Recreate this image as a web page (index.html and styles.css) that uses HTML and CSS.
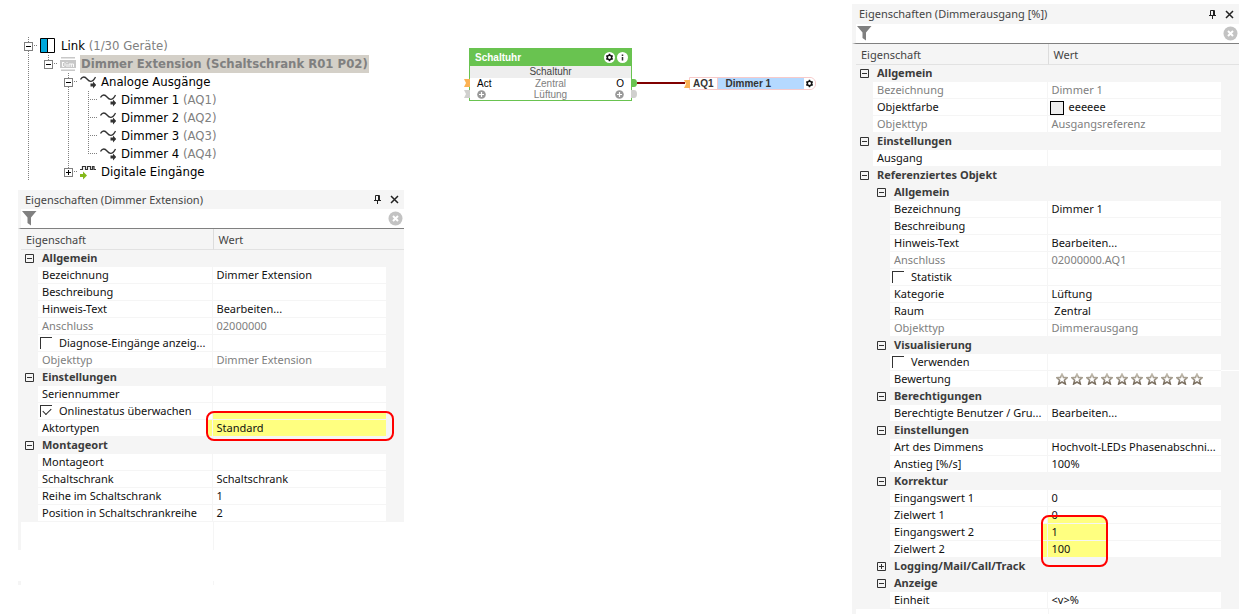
FILE: index.html
```html
<!DOCTYPE html>
<html lang="de">
<head>
<meta charset="utf-8">
<title>Dimmer Extension</title>
<link rel="stylesheet" href="styles.css">
</head>
<body>
<svg class="defs" aria-hidden="true">
  <defs>
    <linearGradient id="starInk" x1="0" y1="0" x2="0" y2="1">
      <stop offset="0" stop-color="#c4beb0"/><stop offset="1" stop-color="#75695a"/>
    </linearGradient>
  </defs>
  <symbol id="funnel" viewBox="0 0 15 15"><path fill="#808080" d="M0 0h14.500L9 6.500V14.500L5.500 12V6.500z"/></symbol>
  <symbol id="clear" viewBox="0 0 15 15"><circle cx="7.500" cy="7.500" r="7" fill="#c3c3c3"/><path d="M5 5l5 5M10 5l-5 5" stroke="#fff" stroke-width="2"/></symbol>
  <symbol id="pin" viewBox="0 0 9 9"><path d="M1 5.500h7M2.500 5V.500h4V5M5.500 1v4M4.500 6v3" fill="none" stroke="#222" stroke-width="1"/></symbol>
  <symbol id="close" viewBox="0 0 9 9"><path d="M1 1l7 7M8 1L1 8" fill="none" stroke="#222" stroke-width="1.500"/></symbol>
  <symbol id="minus" viewBox="0 0 9 9"><path d="M.5.5h8v8h-8zM2 4.500h5" fill="none" stroke="#333"/></symbol>
  <symbol id="plus" viewBox="0 0 9 9"><path d="M.5.5h8v8h-8zM2 4.500h5M4.500 2v5" fill="none" stroke="#333"/></symbol>
  <symbol id="analog" viewBox="0 0 16 16"><path d="M.5 5.500C2.500 2 5 2.500 7 5s5 4.500 8.500-2" fill="none" stroke="#333" stroke-width="1.300"/><path d="M10.500 9.500H13V7.500l3.300 3.500-3.300 3.500v-2h-2.500z" fill="#333"/></symbol>
  <symbol id="digital" viewBox="0 0 16 16"><path d="M0 5.500h2.500v-3h3v3h2v-3h3v3h2v-3h1.500v3h2" fill="none" stroke="#333" stroke-width="1.200"/><path d="M0 10h3V7.500l4 4-4 4V13H0z" fill="#84b81a"/></symbol>
  <symbol id="gear" viewBox="0 0 11 11"><circle cx="5.500" cy="5.500" r="5.500" fill="#fff"/><circle cx="5.500" cy="5.500" r="2.200" fill="none" stroke="#111" stroke-width="1.500"/><path d="M5.500 1.800v1.200M5.500 8v1.200M2.300 3.700l1 .6M7.700 6.700l1 .6M2.300 7.300l1-.6M7.700 4.300l1-.6" stroke="#111" stroke-width="1.400"/></symbol>
  <symbol id="info" viewBox="0 0 11 11"><circle cx="5.500" cy="5.500" r="5.500" fill="#fff"/><path d="M5.500 2.500v1.500M5.500 5v3.500" stroke="#333" stroke-width="1.500"/></symbol>
  <symbol id="add" viewBox="0 0 9 9"><circle cx="4.500" cy="4.500" r="4.300" fill="#999"/><path d="M4.500 2v5M2 4.500h5" stroke="#fff" stroke-width="1.200"/></symbol>
  <symbol id="star" viewBox="0 0 12 12"><path d="M6 1l1.500 3.400 3.700.3-2.800 2.500.9 3.700L6 9l-3.300 1.900.9-3.700L.8 4.700l3.700-.3z" fill="#fff" stroke="url(#starInk)" stroke-width="1.600"/></symbol>
</svg>

<main class="workspace">
  <section class="side">
    <div class="tree" role="tree">
      <div class="node"><span class="rail full link"><button class="toggle" aria-label="Link zuklappen"></button></span>
        <svg class="icon" viewBox="0 0 16 16"><path fill="#fff" stroke="#000" d="M.5.5h14v14H.5z"/><path fill="#00a8dc" d="M1 1h6.500v13H1z"/><path stroke="#000" d="M7.500 0v15"/></svg>
        <span class="name">Link <i>(1/30 Geräte)</i></span></div>
      <div class="node"><span class="rail full"></span><span class="rail top link"><button class="toggle" aria-label="Dimmer Extension zuklappen"></button></span>
        <svg class="icon" viewBox="0 0 16 16"><path fill="#c8c8c8" d="M1 1h14v1.500H1zM0 4h16v8H0zM1 13.500h14V15H1z"/><path d="M2.500 6v4.500M2.500 6.500h1.500l1 1v2l-1 1H2.500M7 6v1M7 8v3M9 11V8h4.500v3M11.300 8v3" fill="none" stroke="#fff" stroke-width=".9"/></svg>
        <span class="name selected">Dimmer Extension (Schaltschrank R01 P02)</span></div>
      <div class="node"><span class="rail full"></span><span class="rail"></span><span class="rail full link"><button class="toggle" aria-label="Analoge Ausgänge zuklappen"></button></span>
        <svg class="icon"><use href="#analog"/></svg><span class="name">Analoge Ausgänge</span></div>
      <div class="node"><span class="rail full"></span><span class="rail"></span><span class="rail full"></span><span class="rail full link"></span>
        <svg class="icon"><use href="#analog"/></svg><span class="name">Dimmer 1 <i>(AQ1)</i></span></div>
      <div class="node"><span class="rail full"></span><span class="rail"></span><span class="rail full"></span><span class="rail full link"></span>
        <svg class="icon"><use href="#analog"/></svg><span class="name">Dimmer 2 <i>(AQ2)</i></span></div>
      <div class="node"><span class="rail full"></span><span class="rail"></span><span class="rail full"></span><span class="rail full link"></span>
        <svg class="icon"><use href="#analog"/></svg><span class="name">Dimmer 3 <i>(AQ3)</i></span></div>
      <div class="node"><span class="rail full"></span><span class="rail"></span><span class="rail full"></span><span class="rail top link"></span>
        <svg class="icon"><use href="#analog"/></svg><span class="name">Dimmer 4 <i>(AQ4)</i></span></div>
      <div class="node"><span class="rail full"></span><span class="rail"></span><span class="rail top link"><button class="toggle closed" aria-label="Digitale Eingänge aufklappen"></button></span>
        <svg class="icon"><use href="#digital"/></svg><span class="name">Digitale Eingänge</span></div>
    </div>

    <section class="panel left">
      <header class="title"><h2>Eigenschaften (Dimmer Extension)</h2>
        <button aria-label="Anheften"><svg class="mini"><use href="#pin"/></svg></button><button aria-label="Schließen"><svg class="mini"><use href="#close"/></svg></button></header>
      <div class="filter"><svg class="sym"><use href="#funnel"/></svg><input type="text" aria-label="Filter"><button aria-label="Filter löschen"><svg class="sym"><use href="#clear"/></svg></button></div>
      <table class="grid">
        <colgroup><col class="c-gutter"><col><col class="c-value"><col class="c-end"></colgroup>
        <thead><tr><th colspan="2">Eigenschaft</th><th colspan="2">Wert</th></tr></thead>
        <tbody>
          <tr class="group"><td><button aria-label="Zuklappen"><svg class="mini"><use href="#minus"/></svg></button></td><th colspan="3">Allgemein</th></tr>
          <tr><td></td><td class="k">Bezeichnung</td><td class="v">Dimmer Extension</td><td></td></tr>
          <tr><td></td><td class="k">Beschreibung</td><td class="v"></td><td></td></tr>
          <tr><td></td><td class="k">Hinweis-Text</td><td class="v">Bearbeiten...</td><td></td></tr>
          <tr class="dim"><td></td><td class="k">Anschluss</td><td class="v">02000000</td><td></td></tr>
          <tr><td></td><td class="k check"><label><input type="checkbox">Diagnose-Eingänge anzeig...</label></td><td class="v"></td><td></td></tr>
          <tr class="dim"><td></td><td class="k">Objekttyp</td><td class="v">Dimmer Extension</td><td></td></tr>
          <tr class="group"><td><button aria-label="Zuklappen"><svg class="mini"><use href="#minus"/></svg></button></td><th colspan="3">Einstellungen</th></tr>
          <tr><td></td><td class="k">Seriennummer</td><td class="v"></td><td></td></tr>
          <tr><td></td><td class="k check"><label><input type="checkbox" checked>Onlinestatus überwachen</label></td><td class="v lit-low"></td><td></td></tr>
          <tr><td></td><td class="k lit-edge">Aktortypen</td><td class="v lit">Standard<span class="mark wide"></span></td><td></td></tr>
          <tr class="group"><td><button aria-label="Zuklappen"><svg class="mini"><use href="#minus"/></svg></button></td><th colspan="3">Montageort</th></tr>
          <tr><td></td><td class="k">Montageort</td><td class="v"></td><td></td></tr>
          <tr><td></td><td class="k">Schaltschrank</td><td class="v">Schaltschrank</td><td></td></tr>
          <tr><td></td><td class="k">Reihe im Schaltschrank</td><td class="v">1</td><td></td></tr>
          <tr><td></td><td class="k">Position in Schaltschrankreihe</td><td class="v">2</td><td></td></tr>
        </tbody>
      </table>
      <div class="rest"><span></span></div>
    </section>
    <div class="rest stub"><span></span></div>
  </section>

  <section class="diagram">
    <article class="block">
      <header>Schaltuhr<span class="tools"><button aria-label="Einstellungen"><svg class="disc"><use href="#gear"/></svg></button><button aria-label="Info"><svg class="disc"><use href="#info"/></svg></button></span></header>
      <p class="kind">Schaltuhr</p>
      <div class="pins"><svg class="port in orange" viewBox="0 0 6 8"><path d="M0 0h6v8H0l2-4z"/></svg><span>Act</span><span class="mid">Zentral</span><span class="end">O</span><svg class="port out green" viewBox="0 0 6 8"><path d="M0 0h3a3 4 0 0 1 0 8H0z"/></svg></div>
      <div class="pins"><svg class="port in grey" viewBox="0 0 6 8"><path d="M0 0h6v8H0l2-4z"/></svg><svg class="add"><use href="#add"/></svg><span class="mid">Lüftung</span><svg class="add end"><use href="#add"/></svg><svg class="port out grey" viewBox="0 0 6 8"><path d="M0 0h3a3 4 0 0 1 0 8H0z"/></svg></div>
    </article>
    <span class="wire"></span>
    <article class="output"><svg class="port in orange" viewBox="0 0 6 8"><path d="M0 0h6v8H0l2-4z"/></svg><span class="id">AQ1</span><span class="label">Dimmer 1</span><button aria-label="Einstellungen"><svg class="disc"><use href="#gear"/></svg></button></article>
  </section>

  <section class="panel right">
    <header class="title"><h2>Eigenschaften (Dimmerausgang [%])</h2>
      <button aria-label="Anheften"><svg class="mini"><use href="#pin"/></svg></button><button aria-label="Schließen"><svg class="mini"><use href="#close"/></svg></button></header>
    <div class="filter"><svg class="sym"><use href="#funnel"/></svg><input type="text" aria-label="Filter"><button aria-label="Filter löschen"><svg class="sym"><use href="#clear"/></svg></button></div>
    <table class="grid">
      <colgroup><col class="c-gutter"><col class="c-gutter"><col><col class="c-value"><col class="c-end"></colgroup>
      <thead><tr><th colspan="3">Eigenschaft</th><th colspan="2">Wert</th></tr></thead>
      <tbody>
        <tr class="group"><td><button aria-label="Zuklappen"><svg class="mini"><use href="#minus"/></svg></button></td><th colspan="4">Allgemein</th></tr>
        <tr class="dim"><td></td><td class="k" colspan="2">Bezeichnung</td><td class="v">Dimmer 1</td><td></td></tr>
        <tr><td></td><td class="k" colspan="2">Objektfarbe</td><td class="v color"><span class="swatch"></span>eeeeee</td><td></td></tr>
        <tr class="dim"><td></td><td class="k" colspan="2">Objekttyp</td><td class="v">Ausgangsreferenz</td><td></td></tr>
        <tr class="group"><td><button aria-label="Zuklappen"><svg class="mini"><use href="#minus"/></svg></button></td><th colspan="4">Einstellungen</th></tr>
        <tr><td></td><td class="k" colspan="2">Ausgang</td><td class="v"></td><td></td></tr>
        <tr class="group"><td><button aria-label="Zuklappen"><svg class="mini"><use href="#minus"/></svg></button></td><th colspan="4">Referenziertes Objekt</th></tr>
        <tr class="group"><td></td><td><button aria-label="Zuklappen"><svg class="mini"><use href="#minus"/></svg></button></td><th colspan="3">Allgemein</th></tr>
        <tr><td></td><td></td><td class="k">Bezeichnung</td><td class="v">Dimmer 1</td><td></td></tr>
        <tr><td></td><td></td><td class="k">Beschreibung</td><td class="v"></td><td></td></tr>
        <tr><td></td><td></td><td class="k">Hinweis-Text</td><td class="v">Bearbeiten...</td><td></td></tr>
        <tr class="dim"><td></td><td></td><td class="k">Anschluss</td><td class="v">02000000.AQ1</td><td></td></tr>
        <tr><td></td><td></td><td class="k check"><label><input type="checkbox">Statistik</label></td><td class="v"></td><td></td></tr>
        <tr><td></td><td></td><td class="k">Kategorie</td><td class="v">Lüftung</td><td></td></tr>
        <tr><td></td><td></td><td class="k">Raum</td><td class="v">&nbsp;Zentral</td><td></td></tr>
        <tr class="dim"><td></td><td></td><td class="k">Objekttyp</td><td class="v">Dimmerausgang</td><td></td></tr>
        <tr class="group"><td></td><td><button aria-label="Zuklappen"><svg class="mini"><use href="#minus"/></svg></button></td><th colspan="3">Visualisierung</th></tr>
        <tr><td></td><td></td><td class="k check"><label><input type="checkbox">Verwenden</label></td><td class="v"></td><td class="seam"></td></tr>
        <tr><td></td><td></td><td class="k">Bewertung</td><td class="v"><span class="stars" role="img" aria-label="0 von 10 Sternen"><svg><use href="#star"/></svg><svg><use href="#star"/></svg><svg><use href="#star"/></svg><svg><use href="#star"/></svg><svg><use href="#star"/></svg><svg><use href="#star"/></svg><svg><use href="#star"/></svg><svg><use href="#star"/></svg><svg><use href="#star"/></svg><svg><use href="#star"/></svg></span></td><td></td></tr>
        <tr class="group"><td></td><td><button aria-label="Zuklappen"><svg class="mini"><use href="#minus"/></svg></button></td><th colspan="3">Berechtigungen</th></tr>
        <tr><td></td><td></td><td class="k">Berechtigte Benutzer / Gru...</td><td class="v">Bearbeiten...</td><td></td></tr>
        <tr class="group"><td></td><td><button aria-label="Zuklappen"><svg class="mini"><use href="#minus"/></svg></button></td><th colspan="3">Einstellungen</th></tr>
        <tr><td></td><td></td><td class="k">Art des Dimmens</td><td class="v">Hochvolt-LEDs Phasenabschni...</td><td></td></tr>
        <tr><td></td><td></td><td class="k">Anstieg [%/s]</td><td class="v">100%</td><td></td></tr>
        <tr class="group"><td></td><td><button aria-label="Zuklappen"><svg class="mini"><use href="#minus"/></svg></button></td><th colspan="3">Korrektur</th></tr>
        <tr><td></td><td></td><td class="k">Eingangswert 1</td><td class="v">0</td><td></td></tr>
        <tr><td></td><td></td><td class="k">Zielwert 1</td><td class="v lit-low short">0</td><td></td></tr>
        <tr><td></td><td></td><td class="k lit-edge">Eingangswert 2</td><td class="v lit short">1<span class="mark tall"></span></td><td></td></tr>
        <tr><td></td><td></td><td class="k lit-edge">Zielwert 2</td><td class="v lit short">100</td><td></td></tr>
        <tr class="group"><td></td><td><button aria-label="Aufklappen"><svg class="mini"><use href="#plus"/></svg></button></td><th colspan="3">Logging/Mail/Call/Track</th></tr>
        <tr class="group"><td></td><td><button aria-label="Zuklappen"><svg class="mini"><use href="#minus"/></svg></button></td><th colspan="3">Anzeige</th></tr>
        <tr><td></td><td></td><td class="k">Einheit</td><td class="v">&lt;v&gt;%</td><td></td></tr>
      </tbody>
    </table>
    <div class="rest"><span></span></div>
  </section>
</main>
</body>
</html>
```

FILE: styles.css
```css
* { box-sizing: border-box; }
body { margin: 0; background: #fff; color: #111; font: 11px/16px "Noto Sans", "Open Sans", sans-serif; }
h2, p { margin: 0; font: inherit; }
button { display: block; margin: 0; padding: 0; border: 0; background: none; }
svg { display: block; flex: none; }
.defs { position: absolute; width: 0; height: 0; }

.workspace {
  display: grid;
  grid-template-columns: minmax(0, 386fr) minmax(0, 448fr) minmax(0, 387fr);
  min-height: 100vh;
  padding: 0 17px 0 18px;
}

/* Device tree */
.tree { padding: 37px 0 9px; font: 13px/18px "DejaVu Sans Condensed", "Noto Sans", sans-serif; color: #000; }
.node { display: flex; height: 18px; white-space: nowrap; }
.node i { font-style: normal; color: #808080; }
.rail { display: flex; align-items: center; width: 20px; padding-left: 6px; background-repeat: no-repeat; }
.rail.full, .rail.top { background-image: repeating-linear-gradient(#808080 0 1px, transparent 1px 2px); background-size: 1px 100%; background-position: 10px 0; }
.rail.top { background-size: 1px 9px; }
.rail.link { background-image: repeating-linear-gradient(#808080 0 1px, transparent 1px 2px), repeating-linear-gradient(90deg, #808080 0 1px, transparent 1px 2px); background-size: 1px 100%, 10px 1px; background-position: 10px 0, 10px 8px; }
.rail.top.link { background-size: 1px 9px, 10px 1px; }
.toggle {
  width: 9px; height: 9px; border: 1px solid #808080;
  background: linear-gradient(#000, #000) center / 5px 1px no-repeat #fff;
}
.toggle.closed { background: linear-gradient(#000, #000) center / 5px 1px no-repeat, linear-gradient(#000, #000) center / 1px 5px no-repeat #fff; }
.icon { width: 16px; height: 16px; margin: 1px 4px 0 2px; }
.name { padding: 0 1px; }
.selected { background: #d4d0c8; color: #808080; font-weight: bold; }

/* Property panels */
.panel { display: flex; flex-direction: column; }
.panel.right { padding-top: 4px; }
.title { display: flex; align-items: center; gap: 8px; height: 20px; padding: 0 5px 0 7px; background: #f5f5f5; color: #444; }
.left .title { height: 19px; }
.title h2 { flex: 1; }
.mini { width: 9px; height: 9px; }
.sym { width: 15px; height: 15px; }
.filter { display: flex; align-items: center; height: 20px; padding: 0 1px; border-left: 3px solid #f5f5f5; border-bottom: 1px solid #808080; }
.filter input { flex: 1; min-width: 0; height: 16px; border: 0; outline: 0; background: none; font: inherit; }
.grid { width: 100%; table-layout: fixed; border-spacing: 0; border-left: 3px solid #f5f5f5; background: #f5f5f5; }
.right .filter, .right .grid, .right .rest { border-left-width: 4px; }
.c-gutter { width: 17px; }
.c-value { width: 45.3%; }
.c-end { width: 18px; }
.grid td, .grid th { height: 17px; padding: 0; text-align: left; white-space: nowrap; font-weight: normal; }
.grid thead th { height: 21px; padding: 2px 0 0 5px; border-bottom: 1px solid #e2e2e2; color: #444; }
.grid thead th + th { border-left: 1px solid #dcdcdc; }
.group button { margin-left: 4px; }
.grid .group th { padding-left: 4px; border-bottom: 1px solid #f5f5f5; font-weight: bold; color: #3c3c3c; }
.grid .k, .grid .v { padding-left: 4px; border-bottom: 1px solid #f5f5f5; background-color: #fff; background-repeat: no-repeat; }
.grid .k { border-right: 1px solid #f5f5f5; }
.grid .v { position: relative; }
.dim { color: #808080; }
.grid .seam { border-bottom: 1px solid #fff; }

.grid .check { padding-left: 2px; }
.check label { display: flex; align-items: center; gap: 7px; height: 16px; }
.check input { appearance: none; flex: none; width: 12px; height: 12px; margin: 0; border: solid #333; border-width: 1px 0 0 1px; }
.check input:checked::after { content: ""; display: block; width: 7px; height: 4px; margin: 2px 0 0 2px; border: solid #222; border-width: 0 0 1px 1px; transform: rotate(-45deg); }
.grid .color { padding-left: 2px; }
.swatch { display: inline-block; width: 14px; height: 14px; margin-right: 5px; border: 1px solid #000; background: #eee; vertical-align: middle; }
.stars { display: flex; gap: 3px; padding-left: 4px; }
.stars svg { width: 12px; height: 12px; }

/* Highlighted settings */
.lit, .lit-low, .lit-edge { background-image: linear-gradient(#ffff80, #ffff80); }
.lit.short { background-size: 58px 100%; }
.lit-low { background-size: 100% 7px; background-position: 0 100%; }
.lit-low.short { background-size: 58px 6px; }
.lit-edge { background-size: 4px 100%; background-position: 100% 0; }
.mark { position: absolute; border: 2px solid #f00; border-radius: 8px; pointer-events: none; z-index: 1; }
.mark.wide { inset: -9px -8px -5px -7px; }
.mark.tall { top: -9px; left: -7px; width: 67px; height: 52px; }

.rest { display: flex; flex: 1; min-height: 28px; padding-right: 18px; border-left: 3px solid #f5f5f5; }
.right .rest { min-height: 0; }
.rest span { width: 53%; border-right: 1px solid #f5f5f5; }
.rest.stub { min-height: 4px; margin-top: 31px; }

/* Function diagram */
.diagram { display: flex; align-items: flex-start; padding: 48px 36px 0 65px; font: 10px/11px "Liberation Sans", Arial, sans-serif; }
.block { flex: none; width: 163px; border: 1px solid #69c350; }
.block header { display: flex; align-items: center; height: 17px; padding: 0 3px 0 5px; background: #69c350; color: #fff; font-weight: bold; }
.tools { display: flex; gap: 2px; margin-left: auto; }
.disc { width: 11px; height: 11px; }
.kind { height: 12px; background: #eee; color: #444; text-align: center; }
.pins { position: relative; display: flex; align-items: center; justify-content: space-between; height: 11px; padding: 0 7px; color: #000; }
.pins .mid { position: absolute; inset: 0; text-align: center; color: #808080; }
.add { width: 9px; height: 9px; }
.port { position: absolute; width: 6px; height: 8px; top: 1px; }
.port.in { left: -6px; }
.port.out { right: -6px; }
.orange { fill: #fbb253; }
.green { fill: #69c350; }
.grey { fill: #d0d0ce; }
.wire { flex: 1; height: 2px; margin: 34px 4px 0 5px; background: #800000; }
.output { position: relative; display: flex; flex: none; align-items: stretch; margin-top: 29px; width: 127px; height: 13px; border: 1px solid #f7caca; border-radius: 0 6px 6px 0; color: #333; font-weight: bold; }
.id { padding: 0 3px; border-right: 1px solid #f7caca; }
.label { flex: 1; padding-left: 8px; background: #b5d9ff; }
.output .port { top: 2px; }
```
